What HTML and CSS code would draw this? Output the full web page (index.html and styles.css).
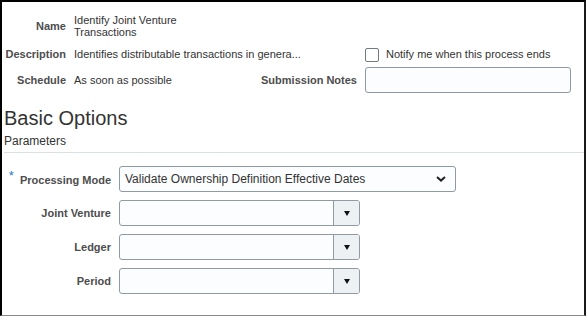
FILE: index.html
```html
<!doctype html>
<html>
<head>
<meta charset="UTF-8">
<title>Submit Process</title>
<link rel="stylesheet" href="styles.css">
</head>
<body>
	<div class="frame">
		<div class="summary">
			<div class="row row-name">
				<div class="label">Name</div>
				<div class="value wrap">Identify Joint Venture<br>Transactions</div>
			</div>
			<div class="row row-desc">
				<div class="label">Description</div>
				<div class="value clip">Identifies distributable transactions in genera...</div>
				<div></div>
				<label class="check"><span class="box"></span>Notify me when this process ends</label>
			</div>
			<div class="row row-sched">
				<div class="label">Schedule</div>
				<div class="value">As soon as possible</div>
				<div class="label">Submission Notes</div>
				<div class="input notes"></div>
			</div>
		</div>

		<h2 class="title">Basic Options</h2>
		<div class="subtitle">Parameters</div>

		<div class="params">
			<div class="prow">
				<div class="plabel"><span class="req">*</span>Processing Mode</div>
				<div class="input select">
					<span>Validate Ownership Definition Effective Dates</span>
					<svg class="chev" width="10" height="6" viewBox="0 0 10 6"><path d="M1 1 L5 4.6 L9 1" fill="none" stroke="#222" stroke-width="2"/></svg>
				</div>
			</div>
			<div class="prow">
				<div class="plabel">Joint Venture</div>
				<div class="input combo"><span class="field"></span><span class="btn"><i class="tri"></i></span></div>
			</div>
			<div class="prow">
				<div class="plabel">Ledger</div>
				<div class="input combo"><span class="field"></span><span class="btn"><i class="tri"></i></span></div>
			</div>
			<div class="prow">
				<div class="plabel">Period</div>
				<div class="input combo"><span class="field"></span><span class="btn"><i class="tri"></i></span></div>
			</div>
		</div>
	</div>
</body>
</html>
```

FILE: styles.css
```css
* { box-sizing: border-box }
html, body {
	margin: 0;
	background: #fff;
}
body {
	font-family: "Liberation Sans", Arial, sans-serif;
	color: #333;
}
.frame {
	width: 586px;
	height: 316px;
	border-top: 2px solid #000;
	border-left: 2px solid #000;
	border-right: 2px solid #1a1a1a;
	border-bottom: 1px solid #8a8a8a;
	padding: 12px 0 0 2px;
	overflow: hidden;
}

/* top summary */
.row {
	display: grid;
	grid-template-columns: 62px 176px 99px 206px;
	column-gap: 8px;
	align-items: center;
	font-size: 11px;
	line-height: 12px;
}
.row-desc { margin-top: 8px; height: 16px; }
.row-sched { margin-top: 5px; height: 26px; }
.label {
	text-align: right;
	font-weight: bold;
	color: #4d4d4d;
	white-space: nowrap;
}
.value { color: #333; white-space: nowrap; }
.check {
	display: flex;
	align-items: center;
	gap: 7px;
	white-space: nowrap;
	color: #333;
}
.check .box {
	width: 14px;
	height: 14px;
	border: 1px solid #707a82;
	border-radius: 2px;
	background: #fff;
	margin-top: 2px;
}
.input {
	height: 26px;
	border: 1px solid #8f9aa3;
	border-radius: 3px;
	background: #fcfdfe;
}

/* section heading */
.title {
	margin: 13px 0 0 0;
	font-size: 20px;
	font-weight: normal;
	line-height: 24px;
	color: #333;
}
.subtitle {
	margin-top: 4px;
	font-size: 12px;
	line-height: 14px;
	color: #333;
	padding-bottom: 4px;
	border-bottom: 1px solid #d9e0e6;
}

/* parameters */
.params {
	padding-top: 13px;
	display: flex;
	flex-direction: column;
	gap: 8px;
}
.prow {
	display: flex;
	align-items: center;
	gap: 8px;
}
.plabel {
	width: 107px;
	text-align: right;
	font-size: 11px;
	font-weight: bold;
	color: #4d4d4d;
	white-space: nowrap;
}
.req {
	color: #2a79c4;
	font-weight: normal;
	font-size: 13px;
	position: relative;
	top: -4px;
	margin-right: 6px;
}
.select {
	width: 337px;
	display: flex;
	align-items: center;
	justify-content: space-between;
	padding: 0 9px 0 5px;
	font-size: 12px;
	color: #333;
}
.combo {
	width: 241px;
	display: flex;
	overflow: hidden;
}
.combo .field { flex: 1; }
.combo .btn {
	width: 26px;
	border-left: 1px solid #8f9aa3;
	background: #eef1f3;
	display: flex;
	align-items: center;
	justify-content: center;
}
.tri {
	width: 0;
	height: 0;
	border-left: 3.5px solid transparent;
	border-right: 3.5px solid transparent;
	border-top: 5px solid #111;
	margin-top: 1px;
}
```
